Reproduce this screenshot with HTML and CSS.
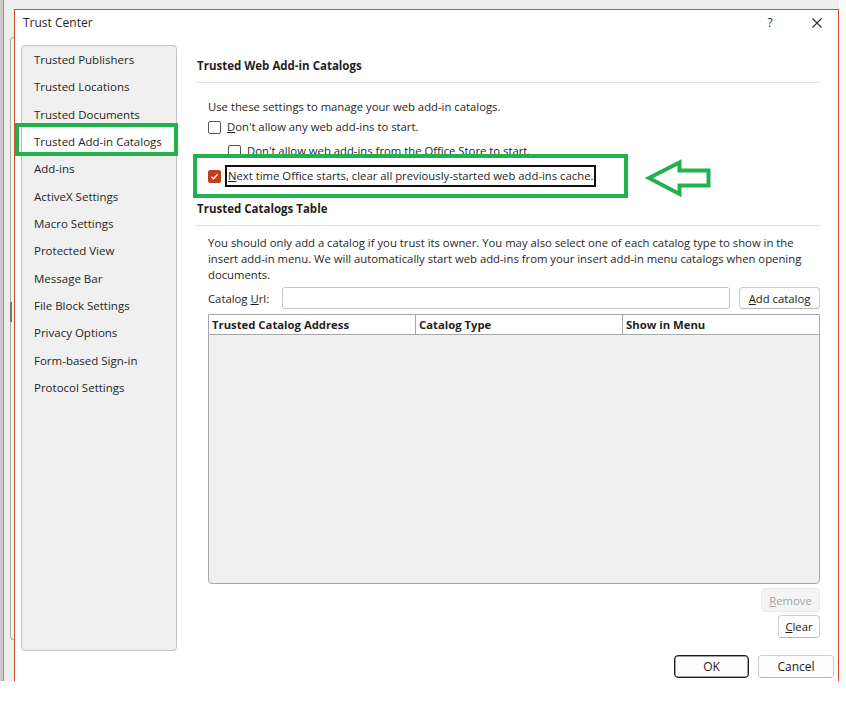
FILE: index.html
```html
<!DOCTYPE html>
<html lang="en">
<head>
    <meta charset="UTF-8">
    <meta name="viewport" content="width=device-width, initial-scale=1.0">
    <title>Trust Center</title>
    <link rel="stylesheet" href="styles.css">
</head>
<body>
    <div class="screen">
        <div class="behind">
            <div class="behind-panel">
                <div class="behind-thumb"></div>
            </div>
        </div>

        <div class="dialog">
            <div class="titlebar">
                <span class="title">Trust Center</span>
                <span class="help">?</span>
                <svg class="close" width="10" height="10" viewBox="0 0 10 10">
                    <path d="M0.5 0.5 L9.5 9.5 M9.5 0.5 L0.5 9.5" stroke="#333" stroke-width="1.1" fill="none"/>
                </svg>
            </div>

            <div class="main">
                <ul class="nav">
                    <li>Trusted Publishers</li>
                    <li>Trusted Locations</li>
                    <li>Trusted Documents</li>
                    <li class="active">Trusted Add-in Catalogs</li>
                    <li>Add-ins</li>
                    <li>ActiveX Settings</li>
                    <li>Macro Settings</li>
                    <li>Protected View</li>
                    <li>Message Bar</li>
                    <li>File Block Settings</li>
                    <li>Privacy Options</li>
                    <li>Form-based Sign-in</li>
                    <li>Protocol Settings</li>
                </ul>

                <div class="panel">
                    <div class="section-title">Trusted Web Add-in Catalogs</div>
                    <div class="section">
                        <p class="intro">Use these settings to manage your web add-in catalogs.</p>
                        <div class="check">
                            <span class="box"></span>
                            <span><u>D</u>on't allow any web add-ins to start.</span>
                        </div>
                        <div class="check sub">
                            <span class="box"></span>
                            <span><u>D</u>on't allow web add-ins from the Office Store to start.</span>
                        </div>
                        <div class="check tall">
                            <span class="box checked">
                                <svg width="11" height="11" viewBox="0 0 11 11">
                                    <path d="M2.4 5.7 L4.5 7.7 L8.6 3.3" stroke="#fff" stroke-width="1.4" fill="none"/>
                                </svg>
                            </span>
                            <span class="focus"><u>N</u>ext time Office starts, clear all previously-started web add-ins cache.</span>
                        </div>
                    </div>

                    <div class="section-title second">Trusted Catalogs Table</div>
                    <div class="section">
                        <p class="note">You should only add a catalog if you trust its owner. You may also select one of each catalog type to show in the insert add-in menu. We will automatically start web add-ins from your insert add-in menu catalogs when opening documents.</p>
                        <div class="url-row">
                            <label for="catalogUrl">Catalog <u>U</u>rl:</label>
                            <input type="text" id="catalogUrl" class="url">
                            <button class="add"><u>A</u>dd catalog</button>
                        </div>
                        <div class="grid">
                            <div class="grid-head">
                                <div>Trusted Catalog Address</div>
                                <div>Catalog Type</div>
                                <div>Show in Menu</div>
                            </div>
                            <div class="grid-body"></div>
                        </div>
                        <div class="side-buttons">
                            <button class="remove" disabled><u>R</u>emove</button>
                            <button class="clear"><u>C</u>lear</button>
                        </div>
                    </div>
                </div>
            </div>

            <div class="footer">
                <button class="ok">OK</button>
                <button class="cancel">Cancel</button>
            </div>
        </div>
    </div>

    <div class="mark mark-nav"></div>
    <div class="mark mark-option"></div>
    <svg class="arrow" width="80" height="50" viewBox="0 0 80 50">
        <polygon points="9,23 39.5,7.5 39.5,15.5 68.5,15.5 68.5,30.5 39.5,30.5 39.5,39" fill="none" stroke="#22b14c" stroke-width="4"/>
    </svg>
</body>
</html>
```

FILE: styles.css
```css
* {
    box-sizing: border-box;
}
body {
    margin: 0;
    position: relative;
    width: 846px;
    height: 720px;
    overflow: hidden;
    background: #fff;
    font-family: "Open Sans", "Noto Sans", sans-serif;
    font-size: 11.5px;
    color: #1f1f1f;
}
.screen {
    display: flex;
    align-items: flex-start;
    height: 681px;
    padding-top: 9px;
    background: linear-gradient(to right, #cacaca 0 3px, #8e8e8e 3px 4px, #eeeeee 4px 839px, #fafafa 839px);
}
.behind {
    width: 14px;
    align-self: stretch;
    padding: 28px 0 41px 10px;
}
.behind-panel {
    height: 100%;
    border-left: 1px solid #a9a9a9;
    border-top: 1px solid #a9a9a9;
    border-bottom: 1px solid #a9a9a9;
    border-radius: 4px 0 0 4px;
    background: #f6f6f6;
}
.behind-thumb {
    width: 2px;
    height: 20px;
    margin: 264px 0 0 -1px;
    background: #777;
}

.dialog {
    width: 825px;
    height: 672px;
    display: flex;
    flex-direction: column;
    background: #fff;
    border: 1px solid #cf4b2b;
    border-bottom: 0;
}
.titlebar {
    display: flex;
    align-items: flex-start;
    height: 35px;
    padding: 5px 0 0 8px;
}
.title {
    flex: 1;
    font-size: 12px;
    line-height: 16px;
}
.help {
    width: 10px;
    margin-right: 37px;
    text-align: center;
    font-size: 12px;
    line-height: 16px;
    color: #333;
}
.close {
    margin: 3px 16px 0 0;
}

.main {
    display: flex;
    gap: 19px;
    height: 606px;
    padding-left: 6px;
}
.nav {
    list-style: none;
    margin: 0;
    padding: 0;
    width: 156px;
    height: 606px;
    flex: none;
    background: #f0f0f0;
    border: 1px solid #c2c2c2;
    border-radius: 4px;
    color: #262626;
}
.nav li {
    height: 27.33px;
    line-height: 27.33px;
    padding-left: 12px;
    white-space: nowrap;
}
.nav li.active {
    background: #fff;
}

.panel {
    flex: 1;
    padding: 13px 18px 0 0;
    font-size: 11.3px;
}
.section-title {
    font-size: 11.5px;
    font-weight: 700;
    line-height: 16px;
    padding: 0 0 8px 1px;
    border-bottom: 1px solid #e1e1e1;
}
.section-title.second {
    margin-top: 14px;
}
.section {
    padding-left: 12px;
}
.intro {
    margin: 16px 0 2px;
    line-height: 16px;
}
.check {
    display: flex;
    align-items: center;
    height: 20px;
    line-height: 16px;
    white-space: nowrap;
}
.check + .check {
    margin-top: 4px;
}
.check.sub {
    padding-left: 20px;
}
.check.tall {
    height: 22px;
}
.box {
    flex: none;
    display: flex;
    align-items: center;
    justify-content: center;
    width: 13px;
    height: 13px;
    margin-right: 6px;
    border: 1px solid #555;
    border-radius: 2px;
    background: #fff;
}
.box.checked {
    background: #c43e1c;
    border-color: #c43e1c;
}
.focus {
    margin-left: -2px;
    padding: 0 1px;
    line-height: 18px;
    border: 2px solid #111;
}

.note {
    margin: 9px 0 0;
    line-height: 16px;
}
.url-row {
    display: flex;
    align-items: center;
    height: 22px;
    margin-top: 4px;
}
.url-row label {
    width: 74px;
}
.url {
    width: 448px;
    height: 22px;
    padding: 0 4px;
    border: 1px solid #c5c5c5;
    border-radius: 3px;
    font: inherit;
}

button {
    padding: 0;
    font: inherit;
    color: #1b1b1b;
    background: #fdfdfd;
    border: 1px solid #cfcfcf;
    border-bottom-color: #b8b8b8;
    border-radius: 4px;
}
.add {
    width: 81px;
    height: 22px;
    margin-left: 9px;
}

.grid {
    display: flex;
    flex-direction: column;
    height: 270px;
    margin-top: 5px;
    background: #f0f0f0;
    border: 1px solid #a8a8a8;
    border-radius: 0 0 4px 4px;
}
.grid-head {
    display: grid;
    grid-template-columns: 207px 207px 1fr;
    height: 20px;
    background: #fff;
    border-bottom: 1px solid #a8a8a8;
}
.grid-head div {
    padding-left: 3px;
    font-weight: 700;
    line-height: 19px;
    border-right: 1px solid #a8a8a8;
}
.grid-head div:last-child {
    border-right: 0;
}

.side-buttons {
    display: flex;
    flex-direction: column;
    align-items: flex-end;
}
.remove {
    width: 59px;
    height: 24px;
    margin-top: 4px;
    color: #a3a3a3;
    background: #f4f4f4;
    border-color: #ebebeb;
}
.clear {
    width: 42px;
    height: 23px;
    margin-top: 3px;
}

.footer {
    display: flex;
    justify-content: flex-end;
    gap: 9px;
    padding: 4px 4px 0 0;
}
.ok, .cancel {
    height: 23px;
    font-size: 12px;
}
.ok {
    width: 75px;
    border: 1px solid #1f1f1f;
    box-shadow: inset 0 0 0 0.5px #444;
}
.cancel {
    width: 76px;
}

.mark {
    position: absolute;
    border: 4px solid #22b14c;
}
.mark-nav {
    left: 15px;
    top: 123px;
    width: 163px;
    height: 33px;
}
.mark-option {
    left: 193px;
    top: 154px;
    width: 435px;
    height: 44px;
}
.arrow {
    position: absolute;
    left: 640px;
    top: 155px;
}
```
